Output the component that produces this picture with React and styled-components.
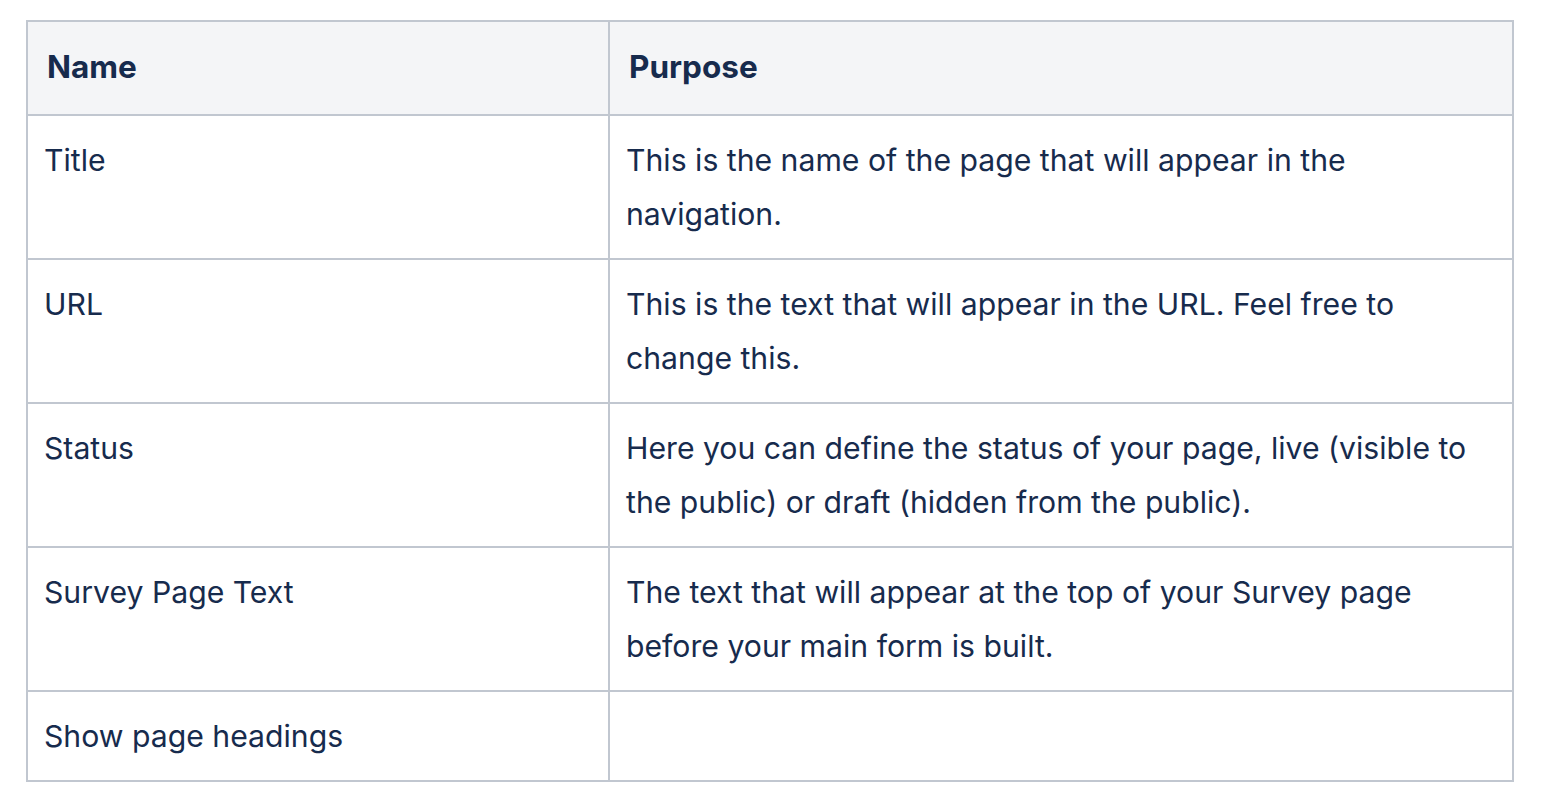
import React from 'react';
import styled, { createGlobalStyle } from 'styled-components';

const GlobalStyle = createGlobalStyle`
    * {
        box-sizing: border-box;
    }
    body {
        margin: 0;
        background: #fff;
        font-family: Inter, 'Noto Sans', sans-serif;
        color: #172b4d;
    }
`;

const rows = [
    { name: 'Title', purpose: 'This is the name of the page that will appear in the navigation.' },
    { name: 'URL', purpose: 'This is the text that will appear in the URL. Feel free to change this.' },
    {
        name: 'Status',
        purpose: 'Here you can define the status of your page, live (visible to the public) or draft (hidden from the public).',
    },
    {
        name: 'Survey Page Text',
        purpose: 'The text that will appear at the top of your Survey page before your main form is built.',
    },
    { name: 'Show page headings', purpose: '' },
];

const App = () => {
    return (
        <>
            <GlobalStyle />
            <Wrap>
                <Table>
                    <colgroup>
                        <col style={{ width: '582px' }} />
                        <col />
                    </colgroup>
                    <thead>
                        <tr>
                            <HeadCell>Name</HeadCell>
                            <HeadCell>Purpose</HeadCell>
                        </tr>
                    </thead>
                    <tbody>
                        {rows.map(row => (
                            <tr key={row.name}>
                                <Cell>{row.name}</Cell>
                                <Cell>{row.purpose}</Cell>
                            </tr>
                        ))}
                    </tbody>
                </Table>
            </Wrap>
        </>
    );
};

const Wrap = styled.div`
    padding: 20px 30px 0 26px;
`;

const Table = styled.table`
    width: 1488px;
    border-collapse: collapse;
    table-layout: fixed;
    border: 2px solid #c1c7d0;
`;

const HeadCell = styled.th`
    background: #f4f5f7;
    border: 2px solid #c1c7d0;
    padding: 18px 16px 20px 19px;
    text-align: left;
    vertical-align: top;
    font-size: 31.5px;
    font-weight: 700;
    line-height: 54px;
    color: #172b4d;
`;

const Cell = styled.td`
    border: 2px solid #c1c7d0;
    padding: 16.5px 16px 17.5px 16px;
    vertical-align: top;
    font-size: 30.2px;
    font-weight: 400;
    line-height: 54px;
    color: #172b4d;
`;

export default App;
